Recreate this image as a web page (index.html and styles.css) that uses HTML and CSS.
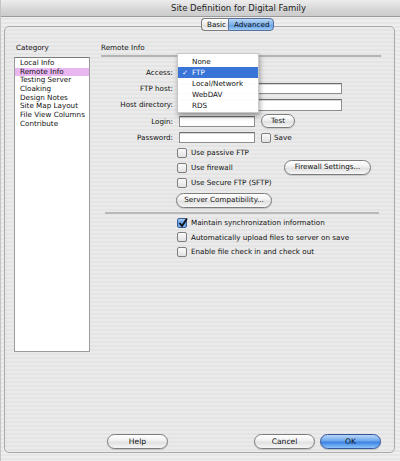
FILE: index.html
```html
<!DOCTYPE html>
<html lang="en">
<head>
    <meta charset="UTF-8">
    <title>Site Definition for Digital Family</title>
    <link rel="stylesheet" href="styles.css">
</head>
<body>
    <div class="window">
        <div class="titlebar">Site Definition for Digital Family</div>
        <div class="tabs">
            <span class="tab">Basic</span><span class="tab active">Advanced</span>
        </div>
        <div class="panel">
            <div class="columns">
                <div class="category">
                    <div class="heading">Category</div>
                    <ul class="cat-list">
                        <li>Local Info</li>
                        <li class="selected">Remote Info</li>
                        <li>Testing Server</li>
                        <li>Cloaking</li>
                        <li>Design Notes</li>
                        <li>Site Map Layout</li>
                        <li>File View Columns</li>
                        <li>Contribute</li>
                    </ul>
                </div>
                <div class="remote">
                    <div class="heading section-title">Remote Info</div>
                    <div class="form">
                        <div class="row">
                            <span class="label">Access:</span>
                            <span class="popup"></span>
                        </div>
                        <div class="row">
                            <span class="label">FTP host:</span>
                            <span class="field wide"></span>
                        </div>
                        <div class="row">
                            <span class="label">Host directory:</span>
                            <span class="field wide tall"></span>
                        </div>
                        <div class="row">
                            <span class="label">Login:</span>
                            <span class="field short"></span>
                            <span class="btn test">Test</span>
                        </div>
                        <div class="row">
                            <span class="label">Password:</span>
                            <span class="field short"></span>
                            <span class="check save"><span class="box"></span>Save</span>
                        </div>

                        <!-- Access drop-down, shown open -->
                        <ul class="menu">
                            <li>None</li>
                            <li class="active"><span class="tick">&#10003;</span>FTP</li>
                            <li>Local/Network</li>
                            <li>WebDAV</li>
                            <li>RDS</li>
                        </ul>
                    </div>

                    <div class="options">
                        <div class="check-row"><span class="check"><span class="box"></span>Use passive FTP</span></div>
                        <div class="check-row">
                            <span class="check"><span class="box"></span>Use firewall</span>
                            <span class="btn firewall">Firewall Settings...</span>
                        </div>
                        <div class="check-row"><span class="check"><span class="box"></span>Use Secure FTP (SFTP)</span></div>
                        <div class="btn-row"><span class="btn compat">Server Compatibility...</span></div>
                    </div>

                    <div class="separator"></div>

                    <div class="options sync">
                        <div class="check-row">
                            <span class="check">
                                <span class="box checked">
                                    <svg width="10" height="10" viewBox="0 0 10 10"><path d="M1.5 5 L4 8 L9 0.5" fill="none" stroke="#111" stroke-width="1.8"/></svg>
                                </span>Maintain synchronization information
                            </span>
                        </div>
                        <div class="check-row"><span class="check"><span class="box"></span>Automatically upload files to server on save</span></div>
                        <div class="check-row"><span class="check"><span class="box"></span>Enable file check in and check out</span></div>
                    </div>
                </div>
            </div>
            <div class="footer">
                <span class="btn help">Help</span>
                <span class="btn cancel">Cancel</span>
                <span class="btn ok">OK</span>
            </div>
        </div>
    </div>
</body>
</html>
```

FILE: styles.css
```css
* {
    margin: 0;
    padding: 0;
    box-sizing: border-box;
}

body {
    font-family: 'DejaVu Sans', 'Lucida Grande', sans-serif;
    font-size: 7.2px;
    color: #111;
    background: #ececec;
}

/* Aqua pinstripe window */
.window {
    width: 400px;
    height: 461px;
    background: repeating-linear-gradient(to bottom, #eeeeee 0, #eeeeee 2px, #e6e6e6 2px, #e6e6e6 4px);
    border-left: 1px solid #c4c4c4;
    overflow: hidden;
}

.titlebar {
    height: 17px;
    line-height: 16px;
    padding-left: 76px;
    text-align: center;
    font-size: 8.5px;
    color: #222;
    background: linear-gradient(to bottom, #ededed, #d6d6d6 60%, #cbcbcb);
    border-bottom: 1px solid #9a9a9a;
}

.tabs {
    position: relative;
    z-index: 2;
    display: flex;
    margin: 1px 0 0 200px;
    height: 13px;
}

.tab {
    display: block;
    height: 13px;
    line-height: 11px;
    padding: 0 5px;
    border: 1px solid #7d7d7d;
    background: linear-gradient(to bottom, #ffffff, #eaeaea 50%, #dcdcdc 51%, #f4f4f4);
    color: #111;
}

.tab:first-child {
    width: 27px;
    border-radius: 4px 0 0 4px;
    border-right: none;
}

.tab.active {
    width: 46px;
    border-radius: 0 4px 4px 0;
    background: linear-gradient(to bottom, #b7d6f6, #7fb3ec 50%, #5b9be4 51%, #9ccaf6);
    border-color: #5a6f9a;
}

.panel {
    display: flex;
    flex-direction: column;
    margin: -5px 0 0 3px;
    width: 391px;
    height: 427px;
    border: 1px solid #a9a9a9;
    border-radius: 5px;
    background: repeating-linear-gradient(to bottom, #ebebeb 0, #ebebeb 2px, #e4e4e4 2px, #e4e4e4 4px);
    padding: 16px 0 3px 9px;
}

.columns {
    display: flex;
    gap: 11px;
}

.heading {
    height: 10px;
    line-height: 10px;
    padding-left: 2px;
}

.category {
    width: 76px;
}

.cat-list {
    list-style: none;
    margin-top: 4px;
    height: 295px;
    background: #fff;
    border: 1px solid #9b9b9b;
    border-top-color: #7a7a7a;
    padding-top: 1px;
}

.cat-list li {
    height: 8.7px;
    line-height: 8.7px;
    padding-left: 5px;
    white-space: nowrap;
}

.cat-list li.selected {
    background: #e9b6f2;
}

.remote {
    width: 280px;
}

.section-title {
    padding-left: 0;
    height: 14px;
    border-bottom: 2px solid #b3b3b3;
}

/* Form rows */
.form {
    position: relative;
    margin-top: 8px;
    display: flex;
    flex-direction: column;
    gap: 2.4px;
}

.row {
    display: flex;
    align-items: center;
    height: 14px;
}

.label {
    width: 72px;
    margin-right: 5px;
    text-align: right;
}

.field {
    display: block;
    height: 11px;
    background: #fff;
    border: 1px solid #8e8e8e;
    border-top-color: #6e6e6e;
    box-shadow: inset 0 1px 0 #d8d8d8;
}

.field.tall {
    height: 12px;
}

.field.wide {
    width: 164px;
}

.field.short {
    width: 76px;
    margin-left: 1px;
}

.popup {
    display: block;
    width: 80px;
    height: 12px;
    border: 1px solid #999;
    border-radius: 3px;
    background: #f4f4f4;
}

.btn {
    display: block;
    height: 14px;
    line-height: 12px;
    text-align: center;
    border: 1px solid #7c7c7c;
    border-radius: 8px;
    background: linear-gradient(to bottom, #ffffff, #f0f0f0 45%, #e0e0e0 55%, #f6f6f6);
    box-shadow: 0 1px 1px rgba(0, 0, 0, 0.15);
    white-space: nowrap;
}

.btn.test {
    width: 34px;
    margin-left: 6px;
}

.check {
    display: flex;
    align-items: center;
    white-space: nowrap;
}

.box {
    display: block;
    width: 10px;
    height: 10px;
    margin-right: 4px;
    border: 1px solid #7f7f7f;
    border-radius: 2px;
    background: linear-gradient(to bottom, #fafafa, #e2e2e2);
}

.box.checked {
    border-color: #3f5f96;
    background: linear-gradient(to bottom, #a9cdf4, #5b9ae2 55%, #7fb6f0);
}

.box svg {
    display: block;
    margin: -1px 0 0 0;
}

.check.save {
    margin-left: 6px;
}

.check.save .box {
    margin-right: 3px;
}

/* Open Access menu lying over the form */
.menu {
    position: absolute;
    left: 76px;
    top: -12px;
    width: 82px;
    height: 60px;
    list-style: none;
    padding-top: 2px;
    background: rgba(255, 255, 255, 0.97);
    border: 1px solid #c8c8c8;
    box-shadow: 1px 3px 5px rgba(0, 0, 0, 0.35);
    z-index: 3;
}

.menu li {
    position: relative;
    height: 11px;
    line-height: 11px;
    padding-left: 14px;
}

.menu li.active {
    background: #3875d7;
    color: #fff;
}

.tick {
    position: absolute;
    left: 4px;
}

.options {
    margin-top: 1px;
    padding-left: 76px;
}

.check-row {
    display: flex;
    align-items: center;
    height: 14px;
    margin-bottom: 1px;
}

.btn.firewall {
    width: 87px;
    height: 15px;
    margin: 0 10px 0 auto;
}

.btn-row {
    margin-top: 3px;
}

.btn.compat {
    width: 96px;
    height: 15px;
    margin-left: -1px;
}

.separator {
    margin: 4px 2px 0 4px;
    height: 2px;
    background: #b8b8b8;
}

.sync {
    margin-top: 2px;
}

.sync .check-row {
    margin-bottom: 0.5px;
}

/* Dialog buttons */
.footer {
    display: flex;
    margin-top: auto;
    padding-left: 93px;
    padding-right: 13px;
}

.footer .btn {
    width: 61px;
    height: 15px;
    line-height: 13px;
    font-size: 7.6px;
}

.btn.cancel {
    margin-left: auto;
    margin-right: 5px;
}

.btn.ok {
    border-color: #32559a;
    background: linear-gradient(to bottom, #b8d7f8, #6ea8ee 45%, #3b82e4 55%, #8cc4fa);
}
```
